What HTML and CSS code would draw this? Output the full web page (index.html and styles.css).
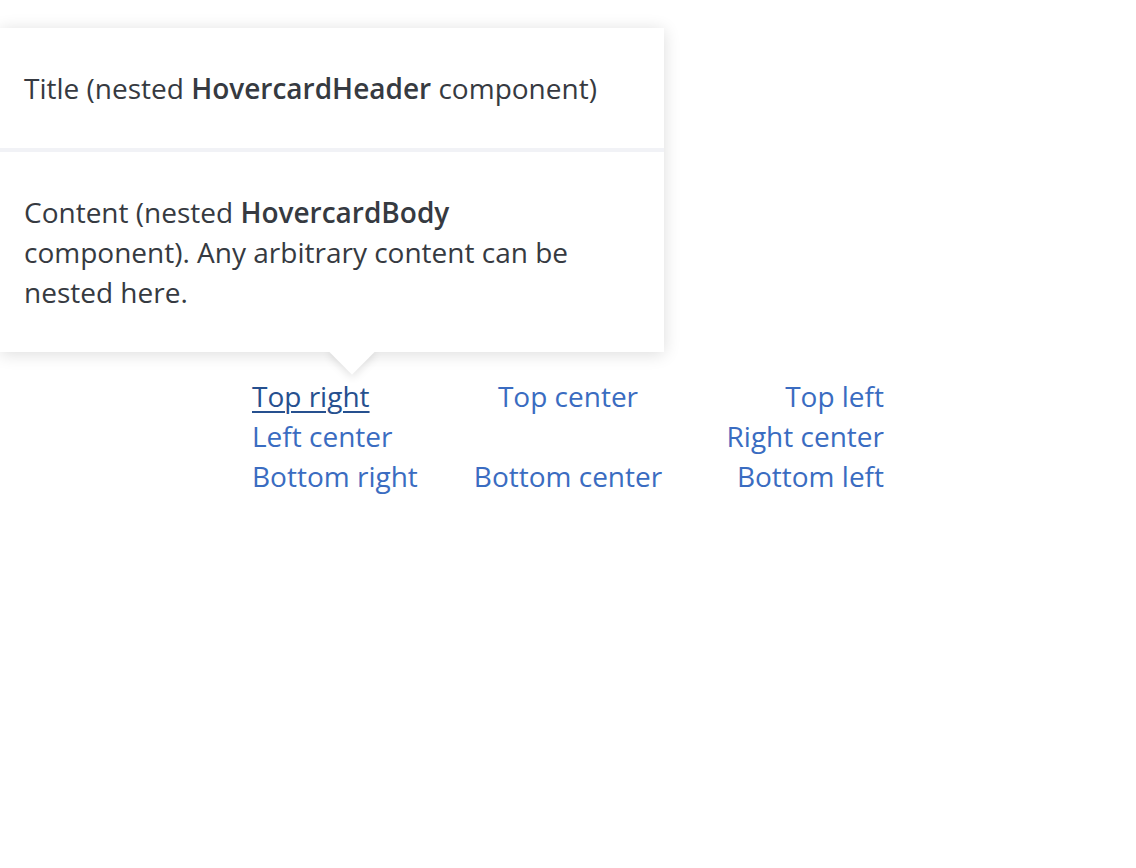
FILE: index.html
```html
<!DOCTYPE html>
<html lang="en">
<head>
<meta charset="utf-8">
<title>Hovercard</title>
<link rel="stylesheet" href="styles.css">
</head>
<body>
<div class="demo">
  <div class="hovercard">
    <div class="hovercard-header">Title (nested <strong>HovercardHeader</strong> component)</div>
    <div class="hovercard-body">Content (nested <strong>HovercardBody</strong> component). Any arbitrary content can be nested here.</div>
    <span class="hovercard-arrow"></span>
  </div>
  <div class="placements">
    <a class="link left hover" href="#">Top right</a>
    <a class="link center" href="#">Top center</a>
    <a class="link right" href="#">Top left</a>
    <a class="link left" href="#">Left center</a>
    <span></span>
    <a class="link right" href="#">Right center</a>
    <a class="link left" href="#">Bottom right</a>
    <a class="link center" href="#">Bottom center</a>
    <a class="link right" href="#">Bottom left</a>
  </div>
</div>
</body>
</html>
```

FILE: styles.css
```css
html, body {
  margin: 0;
  padding: 0;
  background: #ffffff;
}
body {
  font-family: "Open Sans", "Noto Sans", sans-serif;
  font-size: 28px;
  line-height: 40px;
  color: #363a41;
}
.demo {
  position: relative;
  padding-top: 376px;
  height: 492px;
}
.hovercard {
  position: absolute;
  left: 0;
  top: 28px;
  width: 664px;
  background: #fff;
  box-shadow: 0 2px 16px rgba(0, 0, 0, 0.14);
  z-index: 2;
}
.hovercard-header {
  padding: 40px 56px 40px 24px;
  border-bottom: 4px solid #f1f2f6;
  background: #fff;
  position: relative;
  z-index: 2;
  white-space: nowrap;
}
.hovercard-body {
  padding: 40px 64px 40px 24px;
  background: #fff;
  position: relative;
  z-index: 2;
}
strong {
  font-weight: 600;
}
.hovercard-arrow {
  position: absolute;
  left: 336px;
  bottom: -16px;
  width: 32px;
  height: 32px;
  background: #fff;
  transform: rotate(45deg);
  box-shadow: 2px 2px 10px rgba(0, 0, 0, 0.12);
  z-index: 1;
}
.placements {
  width: 632px;
  margin: 0 auto;
  display: grid;
  grid-template-columns: 1fr 1fr 1fr;
}
.link {
  color: #3a6cc1;
  text-decoration: none;
  white-space: nowrap;
}
.link.hover {
  color: #26508f;
  text-decoration: underline;
  text-underline-offset: 4px;
  text-decoration-thickness: 2px;
}
.left { justify-self: start; }
.center { justify-self: center; }
.right { justify-self: end; }
```
